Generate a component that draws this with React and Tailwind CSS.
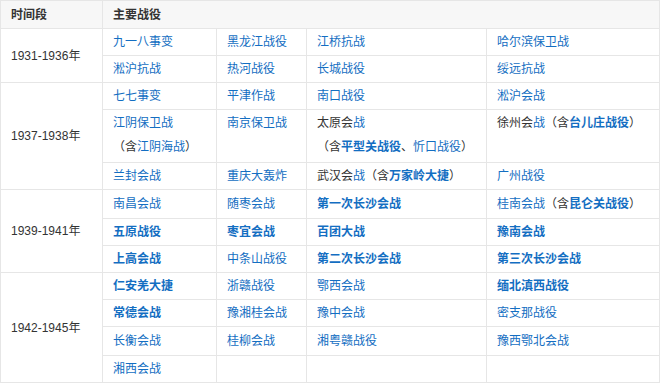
import React from "react";

const L = ({ children, b }) => (
  <span className={b ? "text-[#136ec2] font-bold" : "text-[#136ec2]"}>{children}</span>
);

const groups = [
  {
    label: "1931-1936年",
    rows: [
      { h: "h-[27px]", cells: [<L>九一八事变</L>, <L>黑龙江战役</L>, <L>江桥抗战</L>, <L>哈尔滨保卫战</L>] },
      { h: "h-[27px]", cells: [<L>淞沪抗战</L>, <L>热河战役</L>, <L>长城战役</L>, <L>绥远抗战</L>] },
    ],
  },
  {
    label: "1937-1938年",
    rows: [
      { h: "h-[27px]", cells: [<L>七七事变</L>, <L>平津作战</L>, <L>南口战役</L>, <L>淞沪会战</L>] },
      {
        h: "h-[53px]",
        top: true,
        cells: [
          <>
            <L>江阴保卫战</L>
            <br />（含<L>江阴海战</L>）
          </>,
          <L>南京保卫战</L>,
          <>
            太原会<L>战</L>
            <br />（含<L b>平型关战役</L>、<L>忻口战役</L>）
          </>,
          <>
            徐州会<L>战</L>（含<L b>台儿庄战役</L>）
          </>,
        ],
      },
      {
        h: "h-[27px]",
        cells: [
          <L>兰封会战</L>,
          <L>重庆大轰炸</L>,
          <>
            武汉会<L>战</L>（含<L b>万家岭大捷</L>）
          </>,
          <L>广州战役</L>,
        ],
      },
    ],
  },
  {
    label: "1939-1941年",
    rows: [
      {
        h: "h-[29px]",
        cells: [
          <L>南昌会战</L>,
          <L>随枣会战</L>,
          <L b>第一次长沙会战</L>,
          <>
            <L>桂南会战</L>（含<L b>昆仑关战役</L>）
          </>,
        ],
      },
      { h: "h-[27px]", cells: [<L b>五原战役</L>, <L b>枣宜会战</L>, <L b>百团大战</L>, <L b>豫南会战</L>] },
      { h: "h-[27px]", cells: [<L b>上高会战</L>, <L>中条山战役</L>, <L b>第二次长沙会战</L>, <L b>第三次长沙会战</L>] },
    ],
  },
  {
    label: "1942-1945年",
    rows: [
      { h: "h-[27px]", cells: [<L b>仁安羌大捷</L>, <L>浙赣战役</L>, <L>鄂西会战</L>, <L b>缅北滇西战役</L>] },
      { h: "h-[27px]", cells: [<L b>常德会战</L>, <L>豫湘桂会战</L>, <L>豫中会战</L>, <L>密支那战役</L>] },
      { h: "h-[29px]", cells: [<L>长衡会战</L>, <L>桂柳会战</L>, <L>湘粤赣战役</L>, <L>豫西鄂北会战</L>] },
      { h: "h-[27px]", cells: [<L>湘西会战</L>, null, null, null] },
    ],
  },
];

export default function App() {
  return (
    <div
      className="w-[660px] h-[384px] bg-white text-[#333] text-[12px] leading-[24px]"
      style={{ fontFamily: '"Liberation Sans", Arial, "Noto Sans CJK SC", sans-serif' }}
    >
      <table className="table-fixed border-collapse w-[659px]">
        <colgroup>
          <col className="w-[102px]" />
          <col className="w-[114px]" />
          <col className="w-[90px]" />
          <col className="w-[180px]" />
          <col className="w-[173px]" />
        </colgroup>
        <thead>
          <tr className="h-[28px] bg-[#f7f7f7]">
            <th className="border border-[#e6e6e6] px-[10px] py-0 text-left font-bold align-middle">时间段</th>
            <th colSpan={4} className="border border-[#e6e6e6] px-[10px] py-0 text-left font-bold align-middle">
              主要战役
            </th>
          </tr>
        </thead>
        <tbody>
          {groups.map((g, gi) =>
            g.rows.map((r, ri) => (
              <tr key={gi + "-" + ri} className={r.h}>
                {ri === 0 && (
                  <td rowSpan={g.rows.length} className="border border-[#e6e6e6] px-[10px] py-0 align-middle">
                    {g.label}
                  </td>
                )}
                {r.cells.map((c, ci) => (
                  <td
                    key={ci}
                    className={
                      "border border-[#e6e6e6] px-[10px] py-0 " + (r.top ? "align-top pt-[1px]" : "align-middle")
                    }
                  >
                    {c}
                  </td>
                ))}
              </tr>
            ))
          )}
        </tbody>
      </table>
    </div>
  );
}
